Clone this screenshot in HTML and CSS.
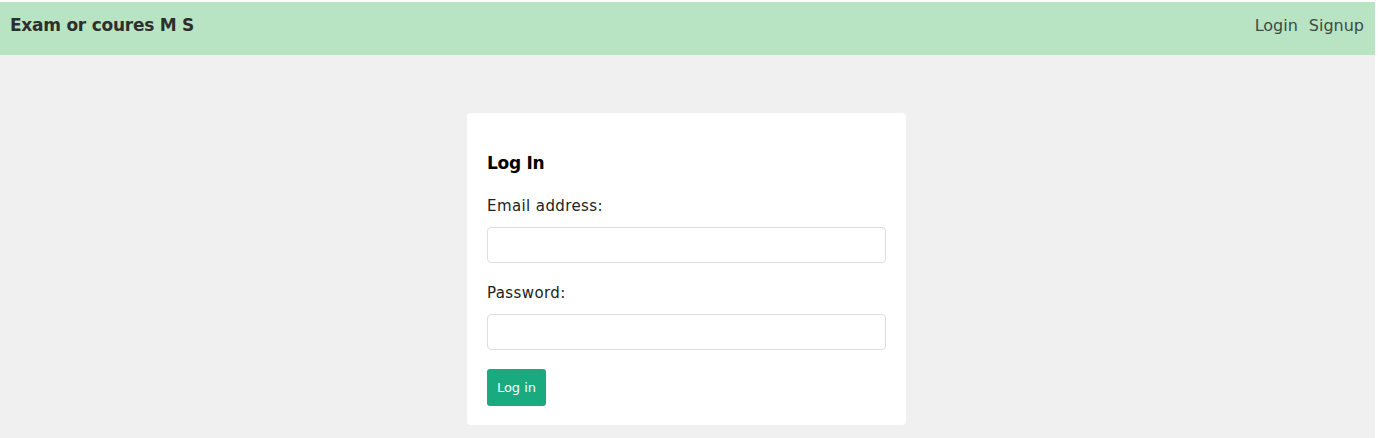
FILE: index.html
```html
<!DOCTYPE html>
<html lang="en">
<head>
<meta charset="utf-8">
<title>Exam or coures M S</title>
<link rel="stylesheet" href="styles.css">
</head>
<body>
<div class="page">
  <header class="topbar">
    <div class="brand">Exam or coures M S</div>
    <nav class="nav">
      <a href="#">Login</a>
      <a href="#">Signup</a>
    </nav>
  </header>
  <main class="main">
    <form class="card">
      <h1 class="title">Log In</h1>
      <label class="label" for="email">Email address:</label>
      <input class="input" id="email" type="email">
      <label class="label" for="pw">Password:</label>
      <input class="input last" id="pw" type="password">
      <button class="btn" type="button">Log in</button>
    </form>
  </main>
</div>
</body>
</html>
```

FILE: styles.css
```css
html, body {
  margin: 0;
  padding: 0;
  background: #ffffff;
  height: 100%;
}
body {
  font-family: "DejaVu Sans", "Open Sans", sans-serif;
  color: #222;
}
.page {
  width: 1375px;
  margin-top: 2px;
  height: 436px;
  background: #f0f0f0;
  display: flex;
  flex-direction: column;
}
.topbar {
  height: 53px;
  background: #b8e4c3;
  display: flex;
  align-items: center;
  justify-content: space-between;
  padding: 0 11px 7px 10px;
  box-sizing: border-box;
}
.brand {
  font-weight: 700;
  font-size: 17px;
  color: #2e2e2e;
  letter-spacing: -0.25px;
}
.nav {
  display: flex;
  gap: 11px;
}
.nav a {
  color: #3d4a42;
  text-decoration: none;
  font-size: 16px;
}
.main {
  display: flex;
  justify-content: center;
  padding-top: 58px;
  padding-right: 2px;
}
.card {
  width: 439px;
  height: 312px;
  box-sizing: border-box;
  background: #fff;
  border-radius: 4px;
  padding: 38px 20px 0 20px;
  display: flex;
  flex-direction: column;
  align-items: flex-start;
}
.title {
  margin: 0 0 21px 0;
  font-size: 17px;
  font-weight: 700;
  color: #000;
  line-height: 24px;
  letter-spacing: -0.3px;
}
.label {
  font-size: 15px;
  color: #222;
  line-height: 20px;
  margin-bottom: 11px;
  letter-spacing: 0.4px;
}
.input {
  width: 399px;
  height: 36px;
  box-sizing: border-box;
  border: 1px solid #dedede;
  border-radius: 4px;
  background: #fff;
  margin: 0 0 20px 0;
  outline: none;
}
.input.last {
  margin-bottom: 19px;
}
.btn {
  width: 59px;
  height: 37px;
  background: #19aa7f;
  color: #fff;
  border: none;
  border-radius: 3px;
  font-family: inherit;
  font-size: 13px;
  padding: 0;
}
```
